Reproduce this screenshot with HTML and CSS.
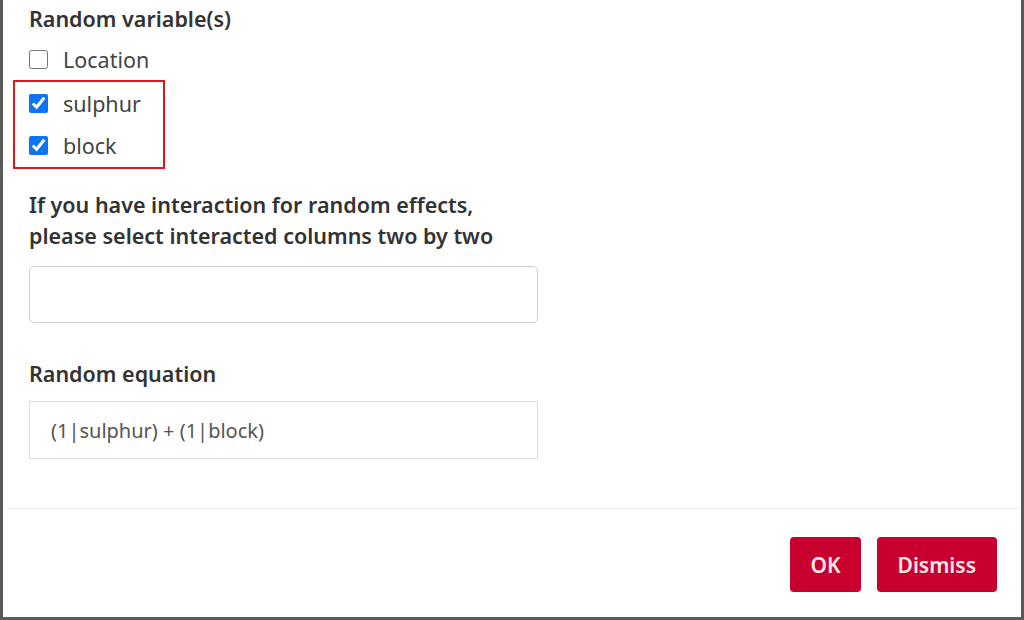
FILE: index.html
```html
<!DOCTYPE html>
<html>
<head>
<meta charset="utf-8">
<link rel="stylesheet" href="styles.css">
</head>
<body>
<div class="frame">
  <div class="content">
    <div class="label">Random variable(s)</div>
    <div class="checks">
      <label class="check first"><input type="checkbox"><span>Location</span></label>
      <div class="highlight">
        <label class="check"><input type="checkbox" checked><span>sulphur</span></label>
        <label class="check"><input type="checkbox" checked><span>block</span></label>
      </div>
    </div>
    <div class="label multi">If you have interaction for random effects,<br>please select interacted columns two by two</div>
    <div class="input rounded"></div>
    <div class="label eq">Random equation</div>
    <div class="input square">(1|sulphur) + (1|block)</div>
  </div>
  <div class="footer">
    <button class="btn ok">OK</button>
    <button class="btn">Dismiss</button>
  </div>
</div>
</body>
</html>
```
FILE: styles.css
```css
html, body {
  margin: 0;
  padding: 0;
  background: #fff;
}
body {
  font-family: "Noto Sans", "Open Sans", sans-serif;
  color: #333;
}
.frame {
  box-sizing: border-box;
  width: 1024px;
  height: 620px;
  border-left: 3px solid #5a5a5a;
  border-right: 3px solid #5a5a5a;
  border-bottom: 3px solid #5a5a5a;
  display: flex;
  flex-direction: column;
}
.content {
  display: flex;
  flex-direction: column;
  height: 509px;
  box-sizing: border-box;
  border-bottom: 1px solid #efefef;
  margin-left: 5px;
  padding: 3px 0 0 21px;
}
.label {
  font-size: 21.5px;
  font-weight: 600;
  color: #333;
  line-height: 31px;
}
.checks {
  display: flex;
  flex-direction: column;
  margin-top: 5px;
}
.check {
  display: flex;
  align-items: center;
  height: 42px;
  font-size: 21.5px;
  color: #444;
}
.check.first {
  height: 41px;
}
.check input {
  width: 19px;
  height: 19px;
  margin: 0 15px 0 0;
  accent-color: #0b75f5;
}
.highlight {
  margin-left: -16px;
  padding: 0 0 1px 14px;
  width: 152px;
  border: 2px solid #e0161b;
  box-sizing: border-box;
  display: flex;
  flex-direction: column;
}
.multi {
  margin-top: 20px;
}
.input {
  width: 509px;
  box-sizing: border-box;
  font-size: 20px;
  color: #555;
  display: flex;
  align-items: center;
}
.rounded {
  height: 57px;
  margin-top: 15px;
  border: 1px solid #cfcfcf;
  border-radius: 5px;
}
.eq {
  margin-top: 35px;
}
.square {
  height: 58px;
  margin-top: 12px;
  border: 1px solid #dedede;
  padding-left: 21px;
}
.footer {
  flex: 1;
  display: flex;
  justify-content: flex-end;
  align-items: flex-start;
  gap: 16px;
  padding: 28px 24px 0 0;
}
.btn {
  height: 55px;
  padding: 0 21px;
  border: none;
  border-radius: 4px;
  background: #c8002e;
  color: #fbe9ec;
  font-family: "Noto Sans", sans-serif;
  font-size: 21px;
  font-weight: 600;
}
.btn.ok {
  padding: 0 20px;
}
```
